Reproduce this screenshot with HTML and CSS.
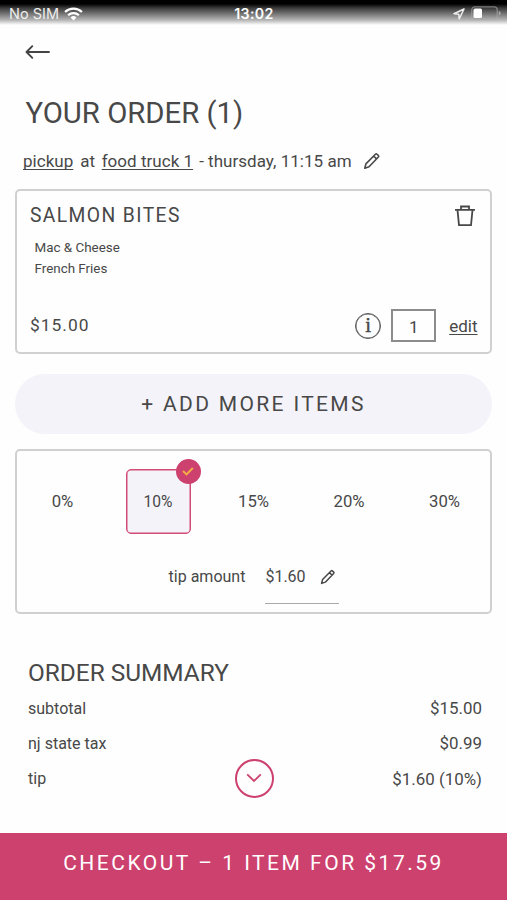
FILE: index.html
```html
<!DOCTYPE html>
<html lang="en">
<head>
<meta charset="utf-8">
<meta name="viewport" content="width=device-width, initial-scale=1">
<title>Your order</title>
<link rel="stylesheet" href="styles.css">
</head>
<body>
<div class="screen">
  <header class="status">
    <div class="carrier"><span>No SIM</span>
      <svg class="wifi" width="19" height="14" viewBox="0 0 18 13" fill="none" stroke="#fff" stroke-width="2.1"><path d="M1 4.6a11.6 11.6 0 0 1 16 0M3.9 7.7a7.4 7.4 0 0 1 10.2 0"/><path d="M9 12.6L6.2 9.8a4 4 0 0 1 5.6 0z" fill="#fff" stroke="none"/></svg>
    </div>
    <time class="clock">13:02</time>
    <div class="device">
      <svg width="12" height="12" viewBox="0 0 12 12" fill="none" stroke="#eee" stroke-width="1.5" stroke-linejoin="round"><path d="M11 1L1 5.7l4.8.6.4 4.7z"/></svg>
      <svg width="30" height="15" viewBox="0 0 30 15"><rect x=".8" y=".8" width="25.4" height="12.8" rx="3" fill="none" stroke="#aaa" stroke-opacity=".65" stroke-width="1.2"/><rect x="2.5" y="2.5" width="8.5" height="9.5" rx="1.5" fill="#fff"/><path d="M27.8 5v4.6q1.8-.6 1.8-2.3T27.8 5z" fill="#aaa"/></svg>
    </div>
  </header>

  <a class="back" aria-label="Back"><svg width="26" height="16" viewBox="0 0 26 16" fill="none" stroke="#444" stroke-width="1.9" stroke-linecap="round" stroke-linejoin="round"><path d="M24 8H1.5M7.3 2.2L1.5 8l5.8 5.8"/></svg></a>
  <h1 class="title">YOUR ORDER (1)</h1>
  <div class="pickup">
    <span class="link">pickup</span><span class="at">at</span><span class="link">food truck 1</span><span class="when">- thursday, 11:15 am</span>
    <svg class="pencil" width="18" height="18" viewBox="0 0 18 18" fill="none" stroke="#484848" stroke-width="1.6" stroke-linejoin="round"><path d="M1.8 16.2l1.1-4.3 9.5-9.7q.8-.8 1.5-.1l1.5 1.4q.7.8 0 1.5L6 14.8zM10.6 4l2.9 2.9"/></svg>
  </div>

  <section class="card item">
    <div class="row">
      <h2 class="name">SALMON BITES</h2>
      <svg class="trash" width="20" height="22" viewBox="0 0 20 22" fill="none" stroke="#484848" stroke-width="1.8"><path d="M0 4.8h20M6 4.6V1.5h8v3.1M2.5 5.2l1.5 14.9h12l1.5-14.9"/></svg>
    </div>
    <ul class="options"><li>Mac &amp; Cheese</li><li>French Fries</li></ul>
    <div class="row bottom">
      <span class="price">$15.00</span>
      <div class="controls">
        <span class="info">i</span>
        <span class="qty">1</span>
        <span class="link edit">edit</span>
      </div>
    </div>
  </section>

  <button class="add">+ ADD MORE ITEMS</button>

  <section class="card tips">
    <div class="choices">
      <span class="choice">0%</span>
      <span class="choice on">10%<i class="badge"><svg width="12" height="9" viewBox="0 0 12 9" fill="none" stroke="#f3ad45" stroke-width="2"><path d="M1 4.1l3.5 3.3L10.8 1"/></svg></i></span>
      <span class="choice">15%</span>
      <span class="choice">20%</span>
      <span class="choice">30%</span>
    </div>
    <div class="amount">
      <span class="label">tip amount</span>
      <div class="field"><span>$1.60</span>
        <svg width="16" height="16" viewBox="0 0 18 18" fill="none" stroke="#484848" stroke-width="1.7" stroke-linejoin="round"><path d="M1.8 16.2l1.1-4.3 9.5-9.7q.8-.8 1.5-.1l1.5 1.4q.7.8 0 1.5L6 14.8zM10.6 4l2.9 2.9"/></svg>
      </div>
    </div>
  </section>

  <section class="summary">
    <h2 class="heading">ORDER SUMMARY</h2>
    <div class="line"><span>subtotal</span><span class="value">$15.00</span></div>
    <div class="line"><span>nj state tax</span><span class="value">$0.99</span></div>
    <div class="line last"><span class="tip">tip</span>
      <span class="expand"><svg width="16" height="10" viewBox="0 0 16 10" fill="none" stroke="#cd416e" stroke-width="1.8"><path d="M1.2 1.4L8 8l6.8-6.6"/></svg></span>
      <span class="value">$1.60 (10%)</span></div>
  </section>

  <footer class="checkout">CHECKOUT – 1 ITEM FOR $17.59</footer>
</div>
</body>
</html>
```
FILE: styles.css
```css
* { box-sizing: border-box; margin: 0; padding: 0; }
body { background: #fefefe; color: #484848; font-family: Roboto, "Liberation Sans", sans-serif; font-size: 16px; }
svg { display: block; flex: none; }
span, h1, h2, time, footer { white-space: nowrap; }
.screen { width: 507px; height: 900px; display: flex; flex-direction: column; overflow: hidden; }
.status { height: 26px; padding: 1px 6px 0 9px; display: grid; grid-template-columns: 1fr auto 1fr; align-items: center; color: #fff; background: linear-gradient(#000 0, #000 4px, #3a3a3a 8px, #777 14px, #b4b4b4 20px, #fefefe 25px); }
.carrier { display: flex; align-items: center; gap: 5px; font: 14.5px/24px Inter, sans-serif; color: #eee; }
.clock { font: 600 14.2px/24px Inter, sans-serif; letter-spacing: .35px; margin-right: 2px; }
.device { display: flex; align-items: center; justify-content: flex-end; gap: 6px; }
.back { height: 52px; padding: 18px 0 0 25px; }
.title { height: 70px; padding-left: 25.5px; font-size: 29.3px; line-height: 70px; font-weight: 400; }
.pickup { height: 41px; padding-left: 23px; display: flex; line-height: 26px; font-size: 17px; letter-spacing: .03px; }
.link { text-decoration: underline; text-underline-offset: 2px; text-decoration-thickness: 1px; text-decoration-skip-ink: none; }
.at { margin: 0 6.5px 0 7px; }
.when { margin: 0 11.5px 0 6px; }
.pencil { margin-top: 4px; }
.card { margin: 0 15px; border: 2px solid #d0d0d0; border-radius: 5px; }
.item { height: 165px; padding: 11px 12.5px 0 13px; }
.row { display: flex; justify-content: space-between; align-items: center; }
.name { font-size: 19.3px; line-height: 28px; font-weight: 400; letter-spacing: 1.4px; }
.trash { margin-right: 2.5px; }
.options { list-style: none; padding: 7px 0 0 4.5px; font-size: 13.4px; line-height: 21px; }
.bottom { margin-top: 29px; height: 34px; }
.price { font-size: 17.4px; letter-spacing: 1px; }
.controls { display: flex; align-items: center; }
.info { width: 26px; height: 26px; margin-top: 1px; border: 1px solid #555; box-shadow: inset 0 0 0 .5px #555; border-radius: 50%; text-align: center; font: 21px/23px "Liberation Serif", serif; -webkit-text-stroke: .4px #484848; }
.qty { width: 45px; height: 33px; margin: 0 13px 0 10px; border: 2px solid #8c8c8c; text-align: center; line-height: 32px; font-size: 17px; }
.edit { font-size: 17px; line-height: 20px; margin-top: 1px; }
.add { margin: 20px 15px 15px; height: 60px; border: 0; border-radius: 30px; background: #f4f3f9; color: #484848; font: 21px/60px Roboto, sans-serif; letter-spacing: 2.35px; }
.tips { height: 165px; padding: 18px 13px 0; }
.choices { display: grid; grid-template-columns: repeat(5, 65px); justify-content: space-between; }
.choice { height: 65px; text-align: center; line-height: 65px; position: relative; font-size: 16.7px; }
.on { border: 1px solid #d34c76; box-shadow: inset 0 0 0 .5px #d34c76; border-radius: 5px; background: #f4f3f9; line-height: 64px; font-size: 15.6px; }
.badge { position: absolute; right: -11px; top: -11px; width: 25px; height: 25px; border-radius: 50%; background: #cd416e; display: flex; align-items: center; justify-content: center; }
.amount { display: flex; justify-content: center; gap: 20px; margin: 27px 0 0 1px; line-height: 32px; }
.field { width: 74px; height: 43px; display: flex; gap: 14px; border-bottom: 1px solid #aaa; }
.field svg { margin-top: 8px; }
.summary { height: 219px; padding: 42px 25px 0 28px; }
.heading { font-size: 24.4px; line-height: 34px; font-weight: 400; }
.line { height: 35px; line-height: 38px; display: flex; justify-content: space-between; }
.last { display: grid; grid-template-columns: 1fr 39px 1fr; align-items: center; height: 35px; }
.value { text-align: right; font-size: 16.9px; line-height: 36px; }
.expand { width: 39px; height: 39px; margin: -2px 0 0 -1px; border: 2px solid #cd416e; border-radius: 50%; display: flex; align-items: center; justify-content: center; }
.checkout { height: 67px; background: #cd416e; color: #fff; text-align: center; font-size: 21px; line-height: 60px; letter-spacing: 2.5px; }
```
